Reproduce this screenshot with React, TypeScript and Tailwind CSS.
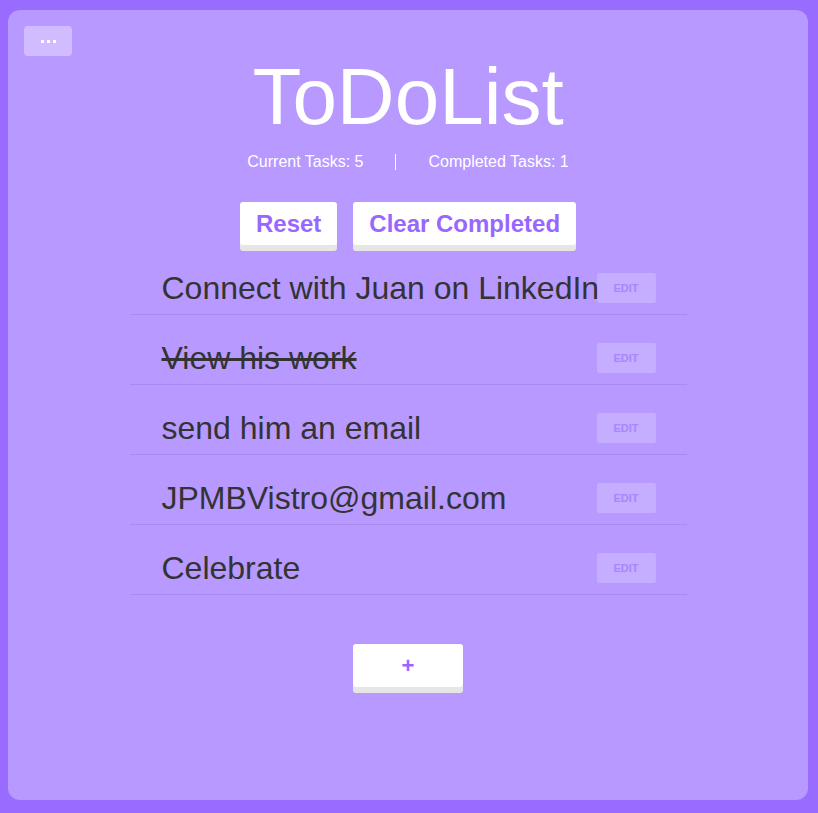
const TASKS = [
	{ id: 1, text: "Connect with Juan on LinkedIn", done: false },
	{ id: 2, text: "View his work", done: true },
	{ id: 3, text: "send him an email", done: false },
	{ id: 4, text: "JPMBVistro@gmail.com", done: false },
	{ id: 5, text: "Celebrate", done: false },
];

function TaskRow({ text, done }: { text: string; done: boolean }) {
	return (
		<li className="flex h-[70px] items-center border-b border-[#a98bee] pl-[32px] pr-[31px] pt-[16px]">
			<span
				className={`min-w-0 flex-1 whitespace-nowrap text-[32px] leading-[40px] text-[#333333] ${
					done ? "line-through" : ""
				}`}
			>
				{text}
			</span>
			<button
				type="button"
				className="flex h-[30px] w-[59px] shrink-0 items-center justify-center rounded-[2px] bg-white/20 pt-px text-[11px] font-bold text-[#a886ff]"
			>
				EDIT
			</button>
		</li>
	);
}

export default function App() {
	const current = TASKS.length;
	const completed = TASKS.filter((t) => t.done).length;

	return (
		<div
			className="min-h-screen bg-[#996bff] pl-2 pt-[10px]"
			style={{ fontFamily: '"Liberation Sans", Arial, sans-serif' }}
		>
			<div className="relative flex h-[790px] w-[800px] flex-col items-center rounded-[12px] bg-[#b799ff]">
				{/* menu */}
				<button
					type="button"
					className="absolute left-4 top-4 flex h-[30px] w-[48px] items-center justify-center gap-[3px] rounded-[4px] bg-white/35"
				>
					<span className="h-[3px] w-[3px] bg-white" />
					<span className="h-[3px] w-[3px] bg-white" />
					<span className="h-[3px] w-[3px] bg-white" />
				</button>

				<h1 className="mt-[47px] text-[80px] leading-[80px] text-white">ToDoList</h1>

				<div className="mt-[15px] flex h-[20px] items-center text-[16px] text-white">
					<span>Current Tasks: {current}</span>
					<span className="mx-[32px] h-[16px] w-px bg-white" />
					<span>Completed Tasks: {completed}</span>
				</div>

				<div className="mt-[30px] flex gap-4">
					<button
						type="button"
						className="h-[43px] rounded-[3px] bg-white px-4 text-[24px] font-bold text-[#9966ff] shadow-[0_6px_0_#e6e6e6]"
					>
						Reset
					</button>
					<button
						type="button"
						className="h-[43px] rounded-[3px] bg-white px-4 text-[24px] font-bold text-[#9966ff] shadow-[0_6px_0_#e6e6e6]"
					>
						Clear Completed
					</button>
				</div>

				<ul className="w-[557px]">
					{TASKS.map((t) => (
						<TaskRow key={t.id} text={t.text} done={t.done} />
					))}
				</ul>

				<button
					type="button"
					className="mt-[49px] h-[43px] w-[110px] rounded-[3px] bg-white text-[22px] font-bold text-[#9966ff] shadow-[0_6px_0_#e6e6e6]"
				>
					+
				</button>
			</div>
		</div>
	);
}
